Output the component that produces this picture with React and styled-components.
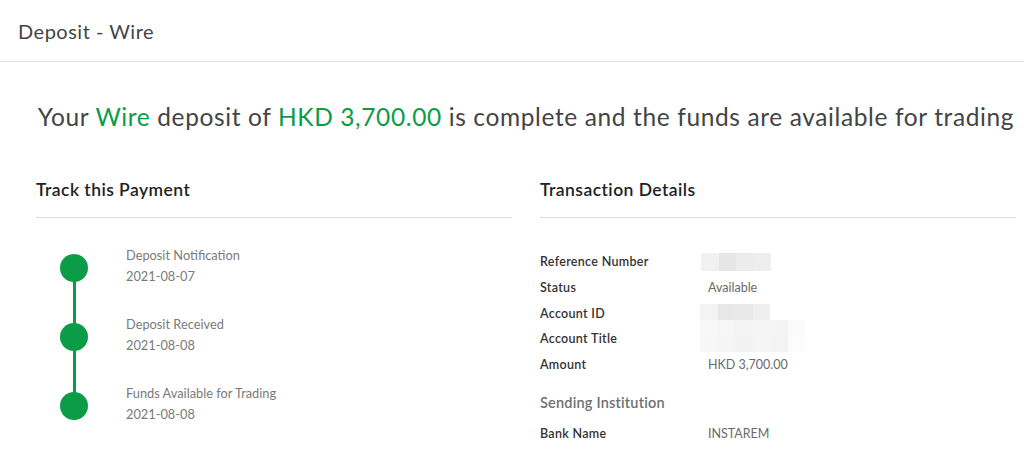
import React from "react";
import styled, { createGlobalStyle } from "styled-components";

const Global = createGlobalStyle`
  html, body { margin: 0; padding: 0; background: #fff; }
  body { font-family: Lato, "Open Sans", sans-serif; color: #333; }
`;

const GREEN = "#0c9c48";

const Page = styled.div`
  width: 1024px;
  height: 461px;
  overflow: hidden;
  background: #fff;
`;

const Header = styled.header`
  height: 62px;
  box-sizing: border-box;
  border-bottom: 1px solid #dcdcdc;
  display: flex;
  align-items: center;
  padding: 0 0 0 18px;
`;

const HeaderTitle = styled.h1`
  margin: 0;
  font-size: 20px;
  font-weight: 400;
  color: #444;
  letter-spacing: 0.5px;
`;

const Content = styled.main`
  padding: 0 8px 0 36px;
`;

const Headline = styled.h2`
  margin: 0;
  padding-top: 38px;
  height: 58px;
  text-align: center;
  font-size: 24.5px;
  font-weight: 400;
  color: #444;
  white-space: nowrap;
  line-height: 34px;
  letter-spacing: 0.62px;
`;

const Accent = styled.span`
  color: ${GREEN};
`;

const Columns = styled.div`
  display: grid;
  grid-template-columns: 476px 476px;
  column-gap: 28px;
  margin-top: 14px;
`;

const Section = styled.section``;

const SectionTitle = styled.h3`
  margin: 0;
  height: 46px;
  box-sizing: border-box;
  border-bottom: 1px solid #dcdcdc;
  font-size: 17.5px;
  font-weight: 600;
  color: #222;
  line-height: 22px;
  padding-top: 7px;
  letter-spacing: 0.45px;
`;

const Timeline = styled.ol`
  list-style: none;
  margin: 0;
  padding: 25px 0 0 24px;
`;

const Step = styled.li`
  display: grid;
  grid-template-columns: 28px 1fr;
  column-gap: 38px;
  height: 69px;
`;

const Track = styled.div`
  position: relative;
  display: flex;
  flex-direction: column;
  align-items: center;
`;

const Connector = styled.span`
  position: absolute;
  left: 12.5px;
  width: 3px;
  top: ${(p) => (p.$first ? "26px" : "-1px")};
  bottom: ${(p) => (p.$last ? "40px" : "-1px")};
  background: ${GREEN};
`;

const Dot = styled.span`
  position: relative;
  margin-top: 11px;
  width: 28px;
  height: 28px;
  border-radius: 50%;
  background: ${GREEN};
`;

const StepText = styled.div`
  display: flex;
  flex-direction: column;
  gap: 5px;
  padding-top: 4px;
  color: #7a7a7a;
  font-size: 12.8px;
  line-height: 16px;
`;

const DetailList = styled.dl`
  margin: 0;
  padding-top: ${(p) => p.$pad}px;
  display: grid;
  grid-template-columns: 168px 1fr;
  grid-auto-rows: 25.7px;
  align-items: center;
`;

const Label = styled.dt`
  font-size: 12.5px;
  font-weight: 600;
  color: #333;
  letter-spacing: 0.3px;
`;

const Value = styled.dd`
  margin: 0;
  font-size: 12.5px;
  color: #6a6a6a;
  position: relative;
  height: 100%;
  display: flex;
  align-items: center;
`;

const SubTitle = styled.h4`
  margin: 17px 0 0;
  font-size: 14.5px;
  line-height: 18px;
  font-weight: 600;
  color: #707070;
  letter-spacing: 0.2px;
`;

const Blur = styled.div`
  position: absolute;
  left: ${(p) => p.$left}px;
  top: ${(p) => p.$top}px;
  display: grid;
  grid-template-columns: repeat(${(p) => p.$cols}, 17.5px);
  grid-auto-rows: ${(p) => p.$rowH}px;
`;

const Pixel = styled.span`
  background: ${(p) => p.$c};
`;

const PixelBlock = ({ left, top, cols, rowH, colors }) => (
  <Blur $left={left} $top={top} $cols={cols} $rowH={rowH}>
    {colors.map((c, i) => (
      <Pixel key={i} $c={c} />
    ))}
  </Blur>
);

const steps = [
  { title: "Deposit Notification", date: "2021-08-07" },
  { title: "Deposit Received", date: "2021-08-08" },
  { title: "Funds Available for Trading", date: "2021-08-08" },
];

export default function App() {
  return (
    <Page>
      <Global />
      <Header>
        <HeaderTitle>Deposit - Wire</HeaderTitle>
      </Header>
      <Content>
        <Headline>
          Your <Accent>Wire</Accent> deposit of <Accent>HKD 3,700.00</Accent> is
          complete and the funds are available for trading
        </Headline>
        <Columns>
          <Section>
            <SectionTitle>Track this Payment</SectionTitle>
            <Timeline>
              {steps.map((s, i) => (
                <Step key={s.title}>
                  <Track>
                    <Connector $first={i === 0} $last={i === steps.length - 1} />
                    <Dot />
                  </Track>
                  <StepText>
                    <span>{s.title}</span>
                    <span>{s.date}</span>
                  </StepText>
                </Step>
              ))}
            </Timeline>
          </Section>
          <Section>
            <SectionTitle>Transaction Details</SectionTitle>
            <DetailList $pad={31}>
              <Label>Reference Number</Label>
              <Value>
                <PixelBlock
                  left={-7}
                  top={4}
                  cols={4}
                  rowH={18}
                  colors={["#f1f1f1", "#e6e6e6", "#ececec", "#eeeeee"]}
                />
              </Value>
              <Label>Status</Label>
              <Value>Available</Value>
              <Label>Account ID</Label>
              <Value>
                <PixelBlock
                  left={-8}
                  top={4}
                  cols={6}
                  rowH={16}
                  colors={[
                    "#f3f3f3", "#e7e7e7", "#e9e9e9", "#efefef", "#fff", "#fff",
                    "#f8f8f8", "#f6f6f6", "#f4f4f4", "#f5f5f5", "#f4f4f4", "#fbfbfb",
                    "#f7f7f7", "#f5f5f5", "#f2f2f2", "#f5f5f5", "#f3f3f3", "#fcfcfc",
                  ]}
                />
              </Value>
              <Label>Account Title</Label>
              <Value />
              <Label>Amount</Label>
              <Value>HKD 3,700.00</Value>
            </DetailList>
            <SubTitle>Sending Institution</SubTitle>
            <DetailList $pad={8}>
              <Label>Bank Name</Label>
              <Value>INSTAREM</Value>
            </DetailList>
          </Section>
        </Columns>
      </Content>
    </Page>
  );
}
